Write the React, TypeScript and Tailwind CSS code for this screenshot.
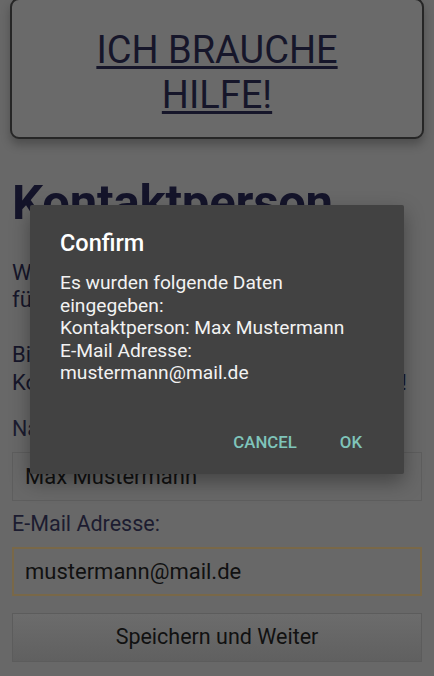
import React from "react";

export default function App() {
  return (
    <div
      className="relative w-[434px] h-[676px] overflow-hidden bg-[#686868]"
      style={{ fontFamily: "Roboto, 'Noto Sans', sans-serif" }}
    >
      <div className="flex flex-col px-[12px]">
        <div className="mx-[-2px] mt-[-2px] h-[141px] rounded-[9px] border-2 border-[#262626] bg-[#6a6a6a] shadow-[0_6px_10px_rgba(0,0,0,0.25)] flex items-center justify-center">
          <div className="text-center text-[38px] leading-[45px] text-[#16162a] underline decoration-[3px] underline-offset-[3px] pt-[8px]">
            ICH BRAUCHE
            <br />
            HILFE!
          </div>
        </div>
        <h1 className="mt-[36px] text-[49px] leading-[56px] font-bold text-[#14142a] tracking-[-0.2px]">
          Kontaktperson
        </h1>
        <p className="mt-[28px] text-[22px] leading-[27px] text-[#16162a]">
          Wir brauchen eine Kontaktperson
          <br />
          für Rückfragen.
        </p>
        <p className="mt-[28px] text-[22px] leading-[28px] text-[#16162a]">
          Bitte geben Sie Name und E-Mail
          <br />
          <span className="tracking-[-0.12px]">Kontaktdaten der Person an, vielen Dank!</span>
        </p>
        <label className="mt-[19px] text-[21.5px] leading-[26px] text-[#1c1c30]">Name:</label>
        <div className="mt-[10px] h-[49px] border border-[#5e5e5e] flex items-center px-[12px] text-[22px] text-[#111]">
          Max Mustermann
        </div>
        <label className="mt-[10px] text-[21.5px] leading-[26px] text-[#1c1c30]">E-Mail Adresse:</label>
        <div className="mt-[10px] h-[49px] border-2 border-[#796848] flex items-center px-[11px] text-[22px] text-[#111]">
          mustermann@mail.de
        </div>
        <div className="mt-[17px] h-[49px] border border-[#5c5c5c] bg-gradient-to-b from-[#6c6c6c] to-[#606060] flex items-center justify-center text-[21.5px] text-[#111]">
          Speichern und Weiter
        </div>
      </div>

      <div className="absolute left-[30px] top-[205px] w-[374px] h-[269px] bg-[#424242] rounded-[2px] shadow-[0_8px_20px_rgba(0,0,0,0.35)] flex flex-col">
        <div className="pl-[30px] pt-[24px] text-[23.5px] leading-[28px] font-medium text-white">Confirm</div>
        <div className="pl-[30px] pt-[15px] text-[19.2px] leading-[22.5px] text-[#f2f2f2]">
          Es wurden folgende Daten
          <br />
          eingegeben:
          <br />
          Kontaktperson: Max Mustermann
          <br />
          E-Mail Adresse:
          <br />
          mustermann@mail.de
        </div>
        <div className="mt-auto mb-[20px] flex justify-end items-center pr-[42px] gap-[43px] text-[16.8px] leading-[24px] font-medium text-[#7fc4ba]">
          <span>CANCEL</span>
          <span>OK</span>
        </div>
      </div>
    </div>
  );
}
